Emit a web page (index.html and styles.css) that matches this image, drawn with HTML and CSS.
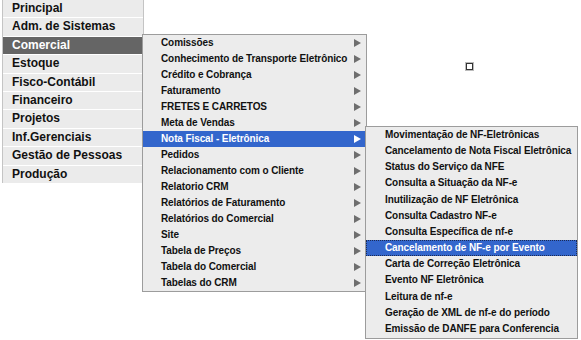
FILE: index.html
```html
<!DOCTYPE html>
<html lang="pt-BR">
<head>
    <meta charset="UTF-8">
    <title>Menu</title>
    <link rel="stylesheet" href="styles.css">
</head>
<body>
    <ul class="main-menu">
        <li><a>Principal</a></li>
        <li><a>Adm. de Sistemas</a></li>
        <li class="open">
            <a>Comercial</a>
            <!-- Comercial submenu -->
            <ul class="sub-menu level-2">
                <li><a>Comissões<span class="arrow"></span></a></li>
                <li><a>Conhecimento de Transporte Eletrônico<span class="arrow"></span></a></li>
                <li><a>Crédito e Cobrança<span class="arrow"></span></a></li>
                <li><a>Faturamento<span class="arrow"></span></a></li>
                <li><a>FRETES E CARRETOS<span class="arrow"></span></a></li>
                <li><a>Meta de Vendas<span class="arrow"></span></a></li>
                <li class="open">
                    <a>Nota Fiscal - Eletrônica<span class="arrow"></span></a>
                    <!-- Nota Fiscal submenu -->
                    <ul class="sub-menu level-3">
                        <li><a>Movimentação de NF-Eletrônicas</a></li>
                        <li><a>Cancelamento de Nota Fiscal Eletrônica</a></li>
                        <li><a>Status do Serviço da NFE</a></li>
                        <li><a>Consulta a Situação da NF-e</a></li>
                        <li><a>Inutilização de NF Eletrônica</a></li>
                        <li><a>Consulta Cadastro NF-e</a></li>
                        <li><a>Consulta Específica de nf-e</a></li>
                        <li class="focused"><a>Cancelamento de NF-e por Evento</a></li>
                        <li><a>Carta de Correção Eletrônica</a></li>
                        <li><a>Evento NF Eletrônica</a></li>
                        <li><a>Leitura de nf-e</a></li>
                        <li><a>Geração de XML de nf-e do período</a></li>
                        <li><a>Emissão de DANFE para Conferencia</a></li>
                    </ul>
                </li>
                <li><a>Pedidos<span class="arrow"></span></a></li>
                <li><a>Relacionamento com o Cliente<span class="arrow"></span></a></li>
                <li><a>Relatorio CRM<span class="arrow"></span></a></li>
                <li><a>Relatórios de Faturamento<span class="arrow"></span></a></li>
                <li><a>Relatórios do Comercial<span class="arrow"></span></a></li>
                <li><a>Site<span class="arrow"></span></a></li>
                <li><a>Tabela de Preços<span class="arrow"></span></a></li>
                <li><a>Tabela do Comercial<span class="arrow"></span></a></li>
                <li><a>Tabelas do CRM<span class="arrow"></span></a></li>
            </ul>
        </li>
        <li><a>Estoque</a></li>
        <li><a>Fisco-Contábil</a></li>
        <li><a>Financeiro</a></li>
        <li><a>Projetos</a></li>
        <li><a>Inf.Gerenciais</a></li>
        <li><a>Gestão de Pessoas</a></li>
        <li><a>Produção</a></li>
    </ul>

    <div class="handle"></div>
</body>
</html>
```

FILE: styles.css
```css
html, body {
    height: 100%;
}
body {
    margin: 0;
    min-height: 340px;
    background: #fff;
    font-family: "Liberation Sans", Arial, sans-serif;
    font-weight: bold;
    color: #111;
}
ul {
    list-style: none;
    margin: 0;
    padding: 0;
}
a {
    display: block;
    cursor: default;
    white-space: nowrap;
}

/* top level */
.main-menu {
    margin-left: 2px;
    width: 140px;
    border-left: 1px solid #c4c4c4;
    border-right: 1px solid #c4c4c4;
    background: #fff;
}
.main-menu > li {
    margin-bottom: 1px;
}
.main-menu > li.open {
    position: relative;
    z-index: 2;
}
.main-menu > li > a {
    height: 17.4px;
    line-height: 17.4px;
    padding-left: 9px;
    font-size: 12px;
    background: #ebebeb;
}
.main-menu > li.open > a {
    background: #656565;
    color: #fff;
}

/* dropdowns */
.sub-menu {
    position: absolute;
    background: #ececec;
    border: 1px solid #9c9c9c;
    font-size: 10px;
    letter-spacing: -0.1px;
}
.level-2 {
    left: 139px;
    top: -3px;
    width: 223px;
}
.level-3 {
    left: 222px;
    top: -5px;
    width: 211px;
    padding-bottom: 1px;
}
.sub-menu > li {
    position: relative;
}
.sub-menu > li > a {
    display: flex;
    justify-content: space-between;
    align-items: center;
    height: 16px;
    line-height: 16px;
    padding-left: 18px;
    padding-right: 5px;
}
.level-3 > li > a {
    height: 16.2px;
    line-height: 16.2px;
    padding-left: 19px;
    padding-right: 2px;
}
.sub-menu > li.open > a,
.sub-menu > li.focused > a {
    background: #3366cc;
    color: #fff;
}
.sub-menu > li.focused > a {
    outline: 1px dotted #1a2a55;
    outline-offset: -1px;
}
.arrow {
    flex-shrink: 0;
    width: 0;
    height: 0;
    border-left: 7px solid #6e6e6e;
    border-top: 4.5px solid transparent;
    border-bottom: 4.5px solid transparent;
}
li.open > a > .arrow {
    border-left-color: #fff;
}

/* resize handle on the canvas */
.handle {
    position: absolute;
    left: 466px;
    top: 63px;
    width: 5px;
    height: 5px;
    border: 1px solid #333;
    box-shadow: 0 0 0 1px #bbb;
}
```
